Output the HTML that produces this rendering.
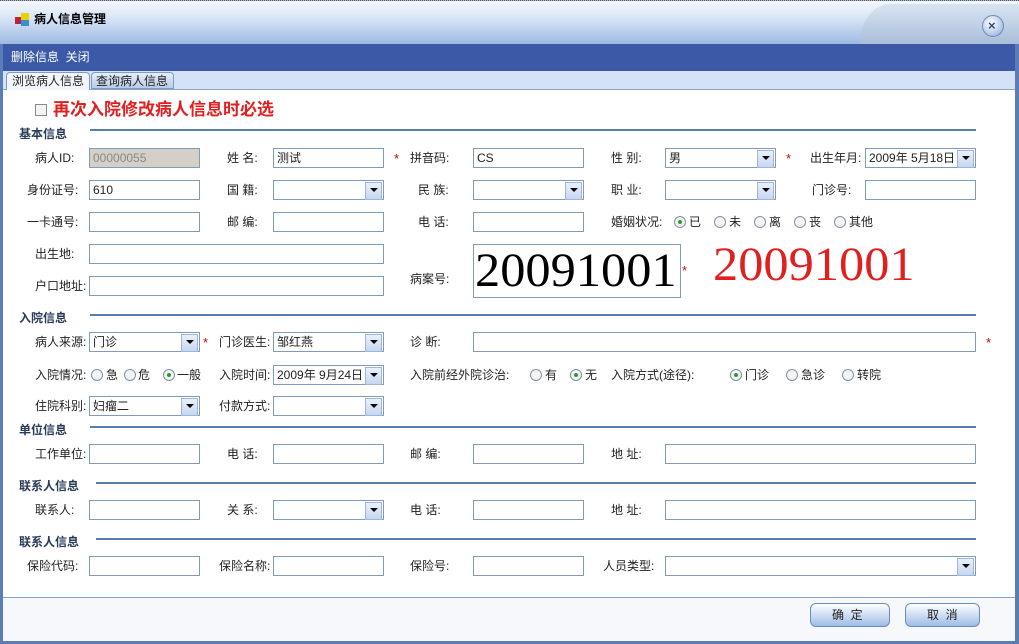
<!DOCTYPE html>
<html><head><meta charset="utf-8"><style>
*{margin:0;padding:0;box-sizing:border-box}
body{width:1019px;height:644px;overflow:hidden;background:#fff;font:12px "Liberation Sans","Noto Sans CJK SC",sans-serif;color:#222;position:relative}
div,span{position:absolute}
.t{white-space:nowrap;line-height:14px}
.i{height:20px;border:1px solid #7f9db9;background:#fff;padding:1px 3px;line-height:16px;white-space:nowrap}
.s{height:20px;border:1px solid #7f9db9;background:#fff;padding:1px 3px;line-height:16px;white-space:nowrap}
.s:after{content:"";position:absolute;right:1px;top:1px;width:15px;height:16px;background:linear-gradient(#eaf1fb,#c5d6f0);border:1px solid #9fb6d9}
.s b{position:absolute;right:5px;top:7px;width:0;height:0;border-left:4px solid transparent;border-right:4px solid transparent;border-top:4px solid #000;z-index:2}
.st{color:#d00;font-size:13px}
.h{font-weight:bold;color:#2a3a5a;font-size:12px}
.ln{height:2px;background:#5b7ea7;left:90px;width:886px}
.r{width:12px;height:12px;border:1px solid #7f8fa8;border-radius:50%;background:#f4f4f4}
.r.on:after{content:"";position:absolute;left:3px;top:3px;width:4px;height:4px;border-radius:50%;background:#2a9a2a}
.big{font:48px/48px 'Liberation Serif',serif;transform:scaleX(1.05);transform-origin:left top}
</style></head><body>
<div style="left:0;top:0;width:1019px;height:44px;background:linear-gradient(#f4f8fd 0%,#d8e5f6 40%,#9db9e2 100%);border-top:1px dotted #555"></div>
<div style="left:860px;top:4px;width:159px;height:40px;background:linear-gradient(#d9e4f2,#a9bed9);border-top-left-radius:30px 40px"></div>
<div style="left:982px;top:15px;width:22px;height:22px;border-radius:50%;background:radial-gradient(circle at 40% 35%,#fff,#b9cde8 60%,#7c9cc8);border:1px solid #6b8bbb"></div>
<div class="t" style="left:988px;top:19px;font-weight:bold;color:#2a4a80;font-size:13px">×</div>
<div style="left:15px;top:17px;width:7px;height:7px;background:#c0203a"></div>
<div style="left:21px;top:13px;width:8px;height:8px;background:#e6d400"></div>
<div style="left:21px;top:20px;width:8px;height:6px;background:#3a8ed8"></div>
<div class="t" style="left:34px;top:12px;font-weight:bold;font-size:12px;color:#000">病人信息管理</div>
<div style="left:0;top:44px;width:1019px;height:27px;background:#3b59a6"></div>
<div class="t" style="left:11px;top:50px;color:#fff">删除信息&nbsp;&nbsp;关闭</div>
<div style="left:0;top:71px;width:1019px;height:19px;background:#d5e1f4;border-bottom:1px solid #8aa3c8"></div>
<div style="left:6px;top:72px;width:84px;height:18px;background:#f2f6fc;border:1px solid #7f9cc6;border-bottom:none;border-radius:4px 4px 0 0"></div>
<div class="t" style="left:12px;top:74px">浏览病人信息</div>
<div style="left:91px;top:72px;width:83px;height:17px;background:linear-gradient(#e6eefa,#b7cbe8);border:1px solid #7f9cc6;border-radius:4px 4px 0 0"></div>
<div class="t" style="left:96px;top:74px">查询病人信息</div>
<div style="left:0;top:44px;width:3px;height:600px;background:#5a7db8"></div>
<div style="left:1015px;top:44px;width:4px;height:600px;background:#5a7db8"></div>
<div style="left:3px;top:597px;width:1012px;height:44px;background:#f6f8fc;border-top:1px solid #8aa3c8"></div>
<div style="left:0;top:641px;width:1019px;height:3px;background:#5a7db8"></div>
<div style="left:810px;top:603px;width:80px;height:24px;border:1px solid #6c8cbb;border-radius:6px;background:linear-gradient(#fff,#c5d7f1 60%,#9fbbe4)"></div>
<div class="t" style="left:832px;top:608px">确&nbsp;&nbsp;定</div>
<div style="left:905px;top:603px;width:75px;height:24px;border:1px solid #6c8cbb;border-radius:6px;background:linear-gradient(#fff,#c5d7f1 60%,#9fbbe4)"></div>
<div class="t" style="left:927px;top:608px">取&nbsp;&nbsp;消</div>

<div style="left:35px;top:104px;width:12px;height:12px;border:1px solid #888;background:#f4f4f4"></div>
<div class="t" style="left:53px;top:100px;color:#e02020;font-size:17px;font-weight:bold;line-height:20px">再次入院修改病人信息时必选</div>

<div class="t h" style="left:19px;top:127px">基本信息</div><div class="ln" style="top:129px"></div>
<div class="t" style="left:35px;top:151px">病人ID:</div><div class="i" style="left:89px;top:148px;width:111px;background:#d4d0c8;color:#888">00000055</div>
<div class="t" style="left:227px;top:151px">姓&nbsp;名:</div><div class="i" style="left:273px;top:148px;width:111px">测试</div><span class="t st" style="left:394px;top:152px">*</span>
<div class="t" style="left:410px;top:151px">拼音码:</div><div class="i" style="left:473px;top:148px;width:111px">CS</div>
<div class="t" style="left:611px;top:151px">性&nbsp;别:</div><div class="s" style="left:665px;top:148px;width:111px">男<b></b></div><span class="t st" style="left:786px;top:152px">*</span>
<div class="t" style="left:810px;top:151px">出生年月:</div><div class="s" style="left:865px;top:148px;width:111px">2009年&nbsp;5月18日<b></b></div>

<div class="t" style="left:27px;top:183px">身份证号:</div><div class="i" style="left:89px;top:180px;width:111px">610</div>
<div class="t" style="left:227px;top:183px">国&nbsp;籍:</div><div class="s" style="left:273px;top:180px;width:111px"><b></b></div>
<div class="t" style="left:418px;top:183px">民&nbsp;族:</div><div class="s" style="left:473px;top:180px;width:111px"><b></b></div>
<div class="t" style="left:611px;top:183px">职&nbsp;业:</div><div class="s" style="left:665px;top:180px;width:111px"><b></b></div>
<div class="t" style="left:812px;top:183px">门诊号:</div><div class="i" style="left:865px;top:180px;width:111px"></div>

<div class="t" style="left:27px;top:215px">一卡通号:</div><div class="i" style="left:89px;top:212px;width:111px"></div>
<div class="t" style="left:227px;top:215px">邮&nbsp;编:</div><div class="i" style="left:273px;top:212px;width:111px"></div>
<div class="t" style="left:418px;top:215px">电&nbsp;话:</div><div class="i" style="left:473px;top:212px;width:111px"></div>
<div class="t" style="left:611px;top:215px">婚姻状况:</div>
<div class="r on" style="left:674px;top:216px"></div><div class="t" style="left:689px;top:215px">已</div>
<div class="r" style="left:714px;top:216px"></div><div class="t" style="left:729px;top:215px">未</div>
<div class="r" style="left:754px;top:216px"></div><div class="t" style="left:769px;top:215px">离</div>
<div class="r" style="left:794px;top:216px"></div><div class="t" style="left:809px;top:215px">丧</div>
<div class="r" style="left:834px;top:216px"></div><div class="t" style="left:849px;top:215px">其他</div>

<div class="t" style="left:35px;top:247px">出生地:</div><div class="i" style="left:89px;top:244px;width:295px"></div>
<div class="t" style="left:35px;top:279px">户口地址:</div><div class="i" style="left:89px;top:276px;width:295px"></div>
<div class="t" style="left:410px;top:272px">病案号:</div>
<div style="left:473px;top:244px;width:208px;height:54px;border:1px solid #7f9db9;background:#fff"></div>
<div class="t big" style="left:475px;top:247px;color:#000">20091001</div>
<span class="t st" style="left:682px;top:264px">*</span>
<div class="t big" style="left:713px;top:241px;color:#e02020">20091001</div>

<div class="t h" style="left:19px;top:311px">入院信息</div><div class="ln" style="top:314px"></div>
<div class="t" style="left:35px;top:335px">病人来源:</div><div class="s" style="left:89px;top:332px;width:111px">门诊<b></b></div><span class="t st" style="left:203px;top:336px">*</span>
<div class="t" style="left:219px;top:335px">门诊医生:</div><div class="s" style="left:273px;top:332px;width:111px">邹红燕<b></b></div>
<div class="t" style="left:410px;top:335px">诊&nbsp;断:</div><div class="i" style="left:473px;top:332px;width:503px"></div><span class="t st" style="left:986px;top:336px">*</span>

<div class="t" style="left:35px;top:368px">入院情况:</div>
<div class="r" style="left:91px;top:369px"></div><div class="t" style="left:106px;top:368px">急</div>
<div class="r" style="left:124px;top:369px"></div><div class="t" style="left:138px;top:368px">危</div>
<div class="r on" style="left:163px;top:369px"></div><div class="t" style="left:177px;top:368px">一般</div>
<div class="t" style="left:219px;top:368px">入院时间:</div><div class="s" style="left:273px;top:365px;width:111px">2009年&nbsp;9月24日<b></b></div>
<div class="t" style="left:410px;top:368px">入院前经外院诊治:</div>
<div class="r" style="left:530px;top:369px"></div><div class="t" style="left:545px;top:368px">有</div>
<div class="r on" style="left:570px;top:369px"></div><div class="t" style="left:585px;top:368px">无</div>
<div class="t" style="left:611px;top:368px">入院方式(途径):</div>
<div class="r on" style="left:730px;top:369px"></div><div class="t" style="left:745px;top:368px">门诊</div>
<div class="r" style="left:786px;top:369px"></div><div class="t" style="left:801px;top:368px">急诊</div>
<div class="r" style="left:842px;top:369px"></div><div class="t" style="left:857px;top:368px">转院</div>

<div class="t" style="left:35px;top:399px">住院科别:</div><div class="s" style="left:89px;top:396px;width:111px">妇瘤二<b></b></div>
<div class="t" style="left:219px;top:399px">付款方式:</div><div class="s" style="left:273px;top:396px;width:111px"><b></b></div>

<div class="t h" style="left:19px;top:423px">单位信息</div><div class="ln" style="top:426px"></div>
<div class="t" style="left:35px;top:447px">工作单位:</div><div class="i" style="left:89px;top:444px;width:111px"></div>
<div class="t" style="left:227px;top:447px">电&nbsp;话:</div><div class="i" style="left:273px;top:444px;width:111px"></div>
<div class="t" style="left:410px;top:447px">邮&nbsp;编:</div><div class="i" style="left:473px;top:444px;width:111px"></div>
<div class="t" style="left:611px;top:447px">地&nbsp;址:</div><div class="i" style="left:665px;top:444px;width:311px"></div>

<div class="t h" style="left:19px;top:479px">联系人信息</div><div class="ln" style="left:96px;width:880px;top:482px"></div>
<div class="t" style="left:35px;top:503px">联系人:</div><div class="i" style="left:89px;top:500px;width:111px"></div>
<div class="t" style="left:227px;top:503px">关&nbsp;系:</div><div class="s" style="left:273px;top:500px;width:111px"><b></b></div>
<div class="t" style="left:410px;top:503px">电&nbsp;话:</div><div class="i" style="left:473px;top:500px;width:111px"></div>
<div class="t" style="left:611px;top:503px">地&nbsp;址:</div><div class="i" style="left:665px;top:500px;width:311px"></div>

<div class="t h" style="left:19px;top:535px">联系人信息</div><div class="ln" style="left:96px;width:880px;top:538px"></div>
<div class="t" style="left:27px;top:559px">保险代码:</div><div class="i" style="left:89px;top:556px;width:111px"></div>
<div class="t" style="left:219px;top:559px">保险名称:</div><div class="i" style="left:273px;top:556px;width:111px"></div>
<div class="t" style="left:410px;top:559px">保险号:</div><div class="i" style="left:473px;top:556px;width:111px"></div>
<div class="t" style="left:603px;top:559px">人员类型:</div><div class="s" style="left:665px;top:556px;width:311px"><b></b></div>
</body></html>
